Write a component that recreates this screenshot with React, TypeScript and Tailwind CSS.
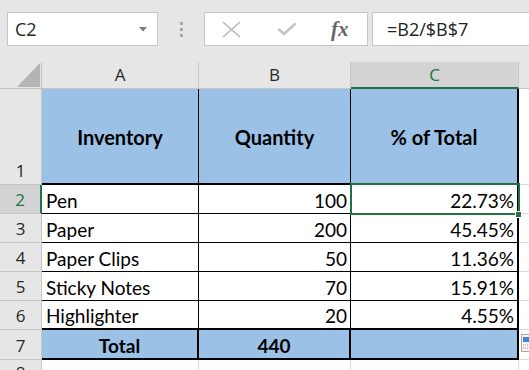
const ui = '"Open Sans", "Liberation Sans", sans-serif';
const cal = 'Lato, "Liberation Sans", sans-serif';

const rows = [
  { n: 2, item: 'Pen', qty: '100', pct: '22.73%' },
  { n: 3, item: 'Paper', qty: '200', pct: '45.45%' },
  { n: 4, item: 'Paper Clips', qty: '50', pct: '11.36%' },
  { n: 5, item: 'Sticky Notes', qty: '70', pct: '15.91%' },
  { n: 6, item: 'Highlighter', qty: '20', pct: '4.55%' },
];

function TopBar() {
  return (
    <div className="flex h-[62px] items-start bg-[#e6e6e6] pt-3" style={{ fontFamily: ui }}>
      {/* name box */}
      <div className="ml-[7px] flex h-[34px] w-[151px] items-center justify-between border border-[#c6c6c6] bg-white pl-[7px] pr-[10px]">
        <span className="text-[18px] text-[#262626]">C2</span>
        <svg width="8" height="5" viewBox="0 0 8 5">
          <path d="M0 0 L8 0 L4 4.5 Z" fill="#7a7a7a" />
        </svg>
      </div>
      <div className="flex h-[34px] w-[46px] flex-col items-center justify-center gap-[3px]">
        <span className="size-[3px] bg-[#a8a8a8]" />
        <span className="size-[3px] bg-[#a8a8a8]" />
        <span className="size-[3px] bg-[#a8a8a8]" />
      </div>
      {/* cancel / enter / fx */}
      <div className="flex h-[34px] w-[164px] items-center border border-[#c6c6c6] bg-white">
        <svg className="ml-[17px]" width="19" height="17" viewBox="0 0 19 17">
          <path d="M1 1 L18 16 M18 1 L1 16" stroke="#b9b9b9" strokeWidth="1.6" fill="none" />
        </svg>
        <svg className="ml-[36px]" width="20" height="14" viewBox="0 0 20 14">
          <path d="M1.5 7 L7 12 L18.5 1.5" stroke="#c4c4c4" strokeWidth="2.6" fill="none" />
        </svg>
        <span
          className="ml-[34px] text-[21px] font-bold italic leading-none text-[#666]"
          style={{ fontFamily: '"Liberation Serif", serif' }}
        >
          fx
        </span>
      </div>
      {/* formula */}
      <div className="ml-[4px] flex h-[34px] flex-1 items-center border border-r-0 border-[#c6c6c6] bg-white pl-[14px]">
        <span className="text-[18px] text-[#222]">=B2/$B$7</span>
      </div>
    </div>
  );
}

export default function App() {
  return (
    <div className="relative h-[370px] w-[529px] overflow-hidden bg-white">
      <TopBar />
      <div className="grid h-[308px] grid-cols-[42px_157px_152px_168px_1fr] grid-rows-[27px_96px_29px_29px_29px_29px_29px_30px_1fr]">
        {/* column headers */}
        <div className="relative border-r border-b border-[#c2c2c2] bg-[#e6e6e6]">
          <svg className="absolute left-[17px] top-[1px]" width="23" height="24" viewBox="0 0 23 24">
            <path d="M23 0 L23 24 L0 24 Z" fill="#b4b4b4" />
          </svg>
        </div>
        <div className="flex items-center justify-center border-r border-b border-[#c6c6c6] bg-[#e6e6e6] text-[17px] text-[#262626]" style={{ fontFamily: ui }}>A</div>
        <div className="flex items-center justify-center border-r border-b border-[#c6c6c6] bg-[#e6e6e6] text-[17px] text-[#262626]" style={{ fontFamily: ui }}>B</div>
        <div className="flex items-center justify-center border-r border-b-2 border-r-[#c6c6c6] border-b-[#217346] bg-[#d3d3d3] text-[17px] text-[#217346]" style={{ fontFamily: ui }}>C</div>
        <div className="border-b border-[#c6c6c6] bg-[#e6e6e6]" />

        {/* row 1 */}
        <div className="flex items-end justify-center border-r border-b border-[#c6c6c6] bg-[#e6e6e6] pb-[1px] text-[17px] text-[#262626]" style={{ fontFamily: ui }}>1</div>
        <div className="flex items-center justify-center border-r border-b-2 border-black bg-[#9bc2e6] pt-[2px] text-[20px] font-bold text-black" style={{ fontFamily: cal }}>Inventory</div>
        <div className="flex items-center justify-center border-r border-b-2 border-black bg-[#9bc2e6] pt-[2px] text-[20px] font-bold text-black" style={{ fontFamily: cal }}>Quantity</div>
        <div className="flex items-center justify-center border-r-2 border-b-2 border-black bg-[#9bc2e6] pt-[2px] text-[20px] font-bold text-black" style={{ fontFamily: cal }}>% of Total</div>
        <div className="border-b border-[#dadada]" />

        {rows.map((r) => (
          <Row key={r.n} {...r} />
        ))}

        {/* row 7 */}
        <div className="flex items-end justify-center border-r border-b border-[#c6c6c6] bg-[#e6e6e6] pb-[1px] text-[17px] text-[#262626]" style={{ fontFamily: ui }}>7</div>
        <div className="flex items-end justify-center border-r-2 border-b-2 border-black bg-[#9bc2e6] pb-[3px] text-[19px] font-bold leading-none text-black" style={{ fontFamily: cal }}>Total</div>
        <div className="flex items-end justify-center border-r-2 border-b-2 border-black bg-[#9bc2e6] pb-[3px] text-[19px] font-bold leading-none text-black" style={{ fontFamily: cal }}>440</div>
        <div className="border-r-2 border-b-2 border-black bg-[#9bc2e6]" />
        <div className="border-b border-[#dadada]" />

        {/* row 8 */}
        <div className="overflow-hidden border-r border-[#c6c6c6] bg-[#e6e6e6] pt-[4px] text-center text-[17px] leading-none text-[#262626]" style={{ fontFamily: ui }}>8</div>
        <div className="border-r border-[#dadada]" />
        <div className="border-r border-[#dadada]" />
        <div className="border-r border-[#dadada]" />
        <div />
      </div>

      {/* selection C2 */}
      <div className="absolute left-[350px] top-[183px] h-[32px] w-[170px] border-2 border-[#217346]" />
      <div className="absolute left-[515px] top-[211px] size-[7px] border border-white bg-[#217346]" />

      {/* quick analysis */}
      <svg className="absolute left-[521px] top-[334px]" width="10" height="18" viewBox="0 0 10 18">
        <rect x="0.5" y="0.5" width="12" height="17" fill="#f4f4f4" stroke="#a8a8a8" />
        <rect x="2" y="3" width="8" height="5" fill="#4a7fd4" />
        <path d="M2 11 H10 M2 14 H10" stroke="#9a9a9a" strokeDasharray="1 1" />
      </svg>
    </div>
  );
}

function Row({ n, item, qty, pct }: { n: number; item: string; qty: string; pct: string }) {
  const selected = n === 2;
  const last = n === 6;
  return (
    <>
      <div
        className={
          selected
            ? 'flex items-end justify-center border-r-2 border-b border-r-[#217346] border-b-[#c6c6c6] bg-[#d3d3d3] pb-[1px] text-[17px] text-[#217346]'
            : 'flex items-end justify-center border-r border-b border-[#c6c6c6] bg-[#e6e6e6] pb-[1px] text-[17px] text-[#262626]'
        }
        style={{ fontFamily: ui }}
      >
        {n}
      </div>
      <div
        className={
          last
            ? 'flex items-end border-r border-b-2 border-black pb-[3px] pl-[4px] text-[19px] leading-none text-black'
            : 'flex items-end border-r border-b border-black pb-[3px] pl-[4px] text-[19px] leading-none text-black'
        }
        style={{ fontFamily: cal }}
      >
        {item}
      </div>
      <div
        className={
          last
            ? 'flex items-end justify-end border-r border-b-2 border-black pb-[3px] pr-[3px] text-[19px] leading-none text-black'
            : 'flex items-end justify-end border-r border-b border-black pb-[3px] pr-[3px] text-[19px] leading-none text-black'
        }
        style={{ fontFamily: cal }}
      >
        {qty}
      </div>
      <div
        className={
          last
            ? 'flex items-end justify-end border-r-2 border-b-2 border-black pb-[3px] pr-[3px] text-[19px] leading-none text-black'
            : 'flex items-end justify-end border-r-2 border-b border-black pb-[3px] pr-[3px] text-[19px] leading-none text-black'
        }
        style={{ fontFamily: cal }}
      >
        {pct}
      </div>
      <div className="border-b border-[#dadada]" />
    </>
  );
}
